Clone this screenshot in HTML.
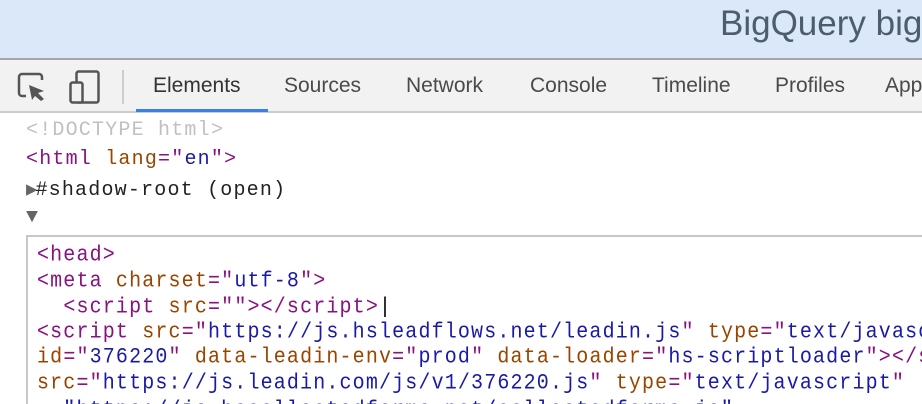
<!DOCTYPE html>
<html><head><style>
body{margin:0;width:922px;height:404px;overflow:hidden;background:#fff;position:relative;font-family:"Liberation Sans",sans-serif}
.banner{position:absolute;left:0;top:0;width:922px;height:58px;background:#dbe8fa;border-bottom:2px solid #a3a6aa;overflow:hidden}
.title{position:absolute;left:720px;top:4px;font-size:35px;color:#4a5e6c;white-space:nowrap}
.tb{position:absolute;left:0;top:60px;width:922px;height:51px;background:#f2f2f2;border-bottom:2px solid #cccccc;overflow:hidden}
.tab{position:absolute;top:14px;font-size:21px;color:#4a4a4a;white-space:nowrap}
.ul{position:absolute;left:136px;top:109px;width:132px;height:3px;background:#3b7fe6}
.code{position:absolute;font-family:"Liberation Mono",monospace;white-space:pre}
.up{left:26px;font-size:20px;letter-spacing:1.2px}
.ed{position:absolute;left:26px;top:235px;width:900px;height:180px;border:2px solid #c8c8c8;border-right:none}
.el{left:37px;font-size:20px;letter-spacing:1.15px;transform:scaleY(1.12);transform-origin:left}
.t{color:#881280}.a{color:#994500}.v{color:#1a1aa6}.g{color:#c0c0c0}.p{color:#222}
.wrap{position:absolute;left:0;top:0;width:922px;height:404px;overflow:hidden}
</style></head><body><div class="wrap">
<div class="banner"><div class="title">BigQuery big</div></div>
<div class="tb">
<svg style="position:absolute;left:0;top:0" width="130" height="50">
<path d="M30 14 H22 a3 3 0 0 0 -3 3 V33 a3 3 0 0 0 3 3 H26" fill="none" stroke="#555" stroke-width="2.5"/>
<path d="M30 14 H39 a3 3 0 0 1 3 3 V20" fill="none" stroke="#555" stroke-width="2.5"/>
<path d="M29 25 L44 31 L38 33 L44 39 L41 41 L35 36 L32 40 Z" fill="#555"/>
<rect x="76.5" y="11.5" width="22" height="31" rx="2" fill="none" stroke="#555" stroke-width="2.5"/>
<rect x="70.5" y="22.5" width="12" height="20" rx="2" fill="#f2f2f2" stroke="#555" stroke-width="2.5"/>
<rect x="122" y="10" width="2" height="34" fill="#ccc"/>
</svg>
<div class="tab" style="left:153px;color:#333">Elements</div>
<div class="tab" style="left:284px">Sources</div>
<div class="tab" style="left:406px">Network</div>
<div class="tab" style="left:530px">Console</div>
<div class="tab" style="left:652px">Timeline</div>
<div class="tab" style="left:775px">Profiles</div>
<div class="tab" style="left:885px">Application</div>
</div>
<div class="ul"></div>
<div class="code up g" style="top:119px">&lt;!DOCTYPE html&gt;</div>
<div class="code up" style="top:148px"><span class="t">&lt;html</span> <span class="a">lang</span><span class="t">="</span><span class="v">en</span><span class="t">"&gt;</span></div>
<div class="code up p" style="top:178px"><span style="color:#666;font-size:19px;letter-spacing:-2px">▶</span>#shadow-root (open)</div>
<div class="code up" style="top:206px;color:#666;font-size:20px">▼</div>
<div class="ed"></div>
<div class="code el" style="top:244px"><span class="t">&lt;head&gt;</span></div>
<div class="code el" style="top:270px"><span class="t">&lt;meta</span> <span class="a">charset</span><span class="t">="</span><span class="v">utf-8</span><span class="t">"&gt;</span></div>
<div class="code el" style="top:296px">  <span class="t">&lt;script</span> <span class="a">src</span><span class="t">=""&gt;&lt;/script&gt;</span><span style="color:#000">|</span></div>
<div class="code el" style="top:321px"><span class="t">&lt;script</span> <span class="a">src</span><span class="t">="</span><span class="v">https://js.hsleadflows.net/leadin.js</span><span class="t">"</span> <span class="a">type</span><span class="t">="</span><span class="v">text/javascript</span></div>
<div class="code el" style="top:346px"><span class="a">id</span><span class="t">="</span><span class="v">376220</span><span class="t">"</span> <span class="a">data-leadin-env</span><span class="t">="</span><span class="v">prod</span><span class="t">"</span> <span class="a">data-loader</span><span class="t">="</span><span class="v">hs-scriptloader</span><span class="t">"&gt;&lt;/script&gt;</span></div>
<div class="code el" style="top:372px"><span class="a">src</span><span class="t">="</span><span class="v">https://js.leadin.com/js/v1/376220.js</span><span class="t">"</span> <span class="a">type</span><span class="t">="</span><span class="v">text/javascript</span><span class="t">"</span></div>
<div class="code el" style="top:399px"><span class="v">  "https://js.hscollectedforms.net/collectedforms.js"</span></div>
</div></body></html>
